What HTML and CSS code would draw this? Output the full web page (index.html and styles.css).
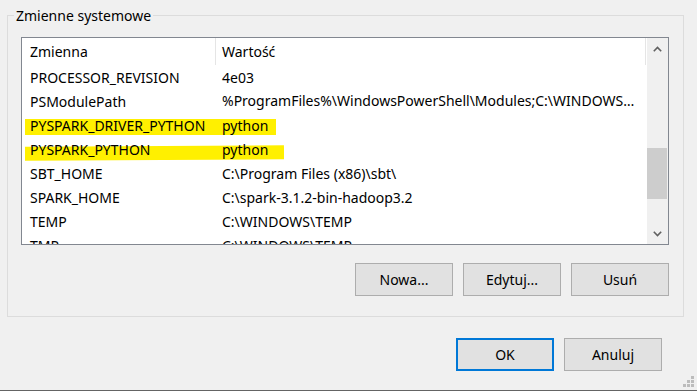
FILE: index.html
```html
<!DOCTYPE html>
<html lang="pl">
<head>
<meta charset="utf-8">
<title>Zmienne systemowe</title>
<link rel="stylesheet" href="styles.css">
</head>
<body>
<div class="dialog">
  <fieldset class="group">
    <legend class="group-title">Zmienne systemowe</legend>
    <div class="list">
      <div class="list-content">
        <div class="list-head">
          <div class="col col-name head-cell">Zmienna</div>
          <div class="col col-value head-cell">Wartość</div>
        </div>
        <div class="row"><div class="col col-name">PROCESSOR_REVISION</div><div class="col col-value">4e03</div></div>
        <div class="row"><div class="col col-name">PSModulePath</div><div class="col col-value ellipsis">%ProgramFiles%\WindowsPowerShell\Modules;C:\WINDOWS\system32\WindowsPowerShell\v1.0\Modules</div></div>
        <div class="row"><span class="mark mark-a"></span><div class="col col-name">PYSPARK_DRIVER_PYTHON</div><div class="col col-value">python</div></div>
        <div class="row"><span class="mark mark-b"></span><div class="col col-name">PYSPARK_PYTHON</div><div class="col col-value">python</div></div>
        <div class="row"><div class="col col-name">SBT_HOME</div><div class="col col-value">C:\Program Files (x86)\sbt\</div></div>
        <div class="row"><div class="col col-name">SPARK_HOME</div><div class="col col-value">C:\spark-3.1.2-bin-hadoop3.2</div></div>
        <div class="row"><div class="col col-name">TEMP</div><div class="col col-value">C:\WINDOWS\TEMP</div></div>
        <div class="row"><div class="col col-name">TMP</div><div class="col col-value">C:\WINDOWS\TEMP</div></div>
      </div>
      <div class="scrollbar">
        <div class="sb-btn">
          <svg width="9" height="6" viewBox="0 0 9 6"><path d="M0.8 5.2 L4.5 1.5 L8.2 5.2" fill="none" stroke="#606060" stroke-width="1.6"/></svg>
        </div>
        <div class="sb-track"><div class="sb-thumb"></div></div>
        <div class="sb-btn">
          <svg width="9" height="6" viewBox="0 0 9 6"><path d="M0.8 0.8 L4.5 4.5 L8.2 0.8" fill="none" stroke="#606060" stroke-width="1.6"/></svg>
        </div>
      </div>
    </div>
    <div class="btn-row">
      <button class="btn">Nowa...</button>
      <button class="btn">Edytuj...</button>
      <button class="btn">Usuń</button>
    </div>
  </fieldset>
  <div class="footer">
    <button class="btn btn-default">OK</button>
    <button class="btn">Anuluj</button>
  </div>
  <svg class="grip" width="11" height="11" viewBox="0 0 11 11">
    <rect x="8" y="0" width="3" height="3" fill="#bcbcbc"/>
    <rect x="4" y="4" width="3" height="3" fill="#bcbcbc"/>
    <rect x="8" y="4" width="3" height="3" fill="#bcbcbc"/>
    <rect x="0" y="8" width="3" height="3" fill="#bcbcbc"/>
    <rect x="4" y="8" width="3" height="3" fill="#bcbcbc"/>
    <rect x="8" y="8" width="3" height="3" fill="#bcbcbc"/>
  </svg>
</div>
</body>
</html>
```
FILE: styles.css
```css
* { box-sizing: border-box; }
html, body { margin: 0; padding: 0; }
body {
  width: 697px;
  height: 391px;
  overflow: hidden;
  background: #f0f0f0;
  font-family: "Noto Sans", "Open Sans", sans-serif;
  font-size: 14px;
  color: #000;
}
.dialog {
  position: relative;
  height: 391px;
  border-bottom: 1px solid #646464;
  padding-top: 5px;
}
.group {
  margin: 0 0 0 7px;
  width: 677px;
  border: 1px solid #dcdcdc;
  padding: 11px 14px 20px 13px;
  min-width: 0;
}
.group-title {
  margin-left: -7px;
  padding: 0 2px;
  line-height: 21px;
  height: 21px;
}
.list {
  display: flex;
  height: 208px;
  border: 1px solid #828790;
  background: #fff;
}
.list-content {
  flex: 1;
  overflow: hidden;
}
.list-head {
  display: flex;
  height: 27px;
}
.head-cell {
  border-right: 1px solid #e5e5e5;
}
.row {
  position: relative;
  display: flex;
  height: 24px;
}
.col {
  position: relative;
  white-space: nowrap;
  display: flex;
  align-items: center;
}
.col-name {
  width: 194px;
  padding-left: 8px;
}
.col-value {
  width: 430px;
  padding-left: 6px;
  padding-right: 8px;
}
.ellipsis {
  display: block;
  overflow: hidden;
  text-overflow: ellipsis;
  line-height: 24px;
}
.mark {
  position: absolute;
  background: #fff000;
}
.mark-a { left: 3px; top: 6px; width: 251px; height: 16px; }
.mark-b { left: 3px; top: 9px; width: 259px; height: 14px; transform: rotate(-0.3deg); }
.scrollbar {
  width: 21px;
  background: #f0f0f0;
  display: flex;
  flex-direction: column;
  margin-left: 1px;
}
.sb-btn {
  height: 21px;
  display: flex;
  align-items: center;
  justify-content: center;
}
.sb-track {
  flex: 1;
  padding-top: 89px;
}
.sb-thumb {
  width: 20px;
  height: 51px;
  background: #cdcdcd;
}
.btn-row {
  display: flex;
  justify-content: flex-end;
  gap: 10px;
  margin-top: 18px;
}
.btn {
  width: 98px;
  height: 33px;
  background: #e1e1e1;
  border: 1px solid #adadad;
  font-family: inherit;
  font-size: 14px;
  color: #000;
  padding: 0;
}
.btn-default {
  border: 2px solid #0078d7;
}
.footer {
  display: flex;
  justify-content: flex-end;
  gap: 10px;
  margin-top: 21px;
  padding-right: 35px;
}
.grip {
  position: absolute;
  right: 3px;
  bottom: 3px;
}
```
